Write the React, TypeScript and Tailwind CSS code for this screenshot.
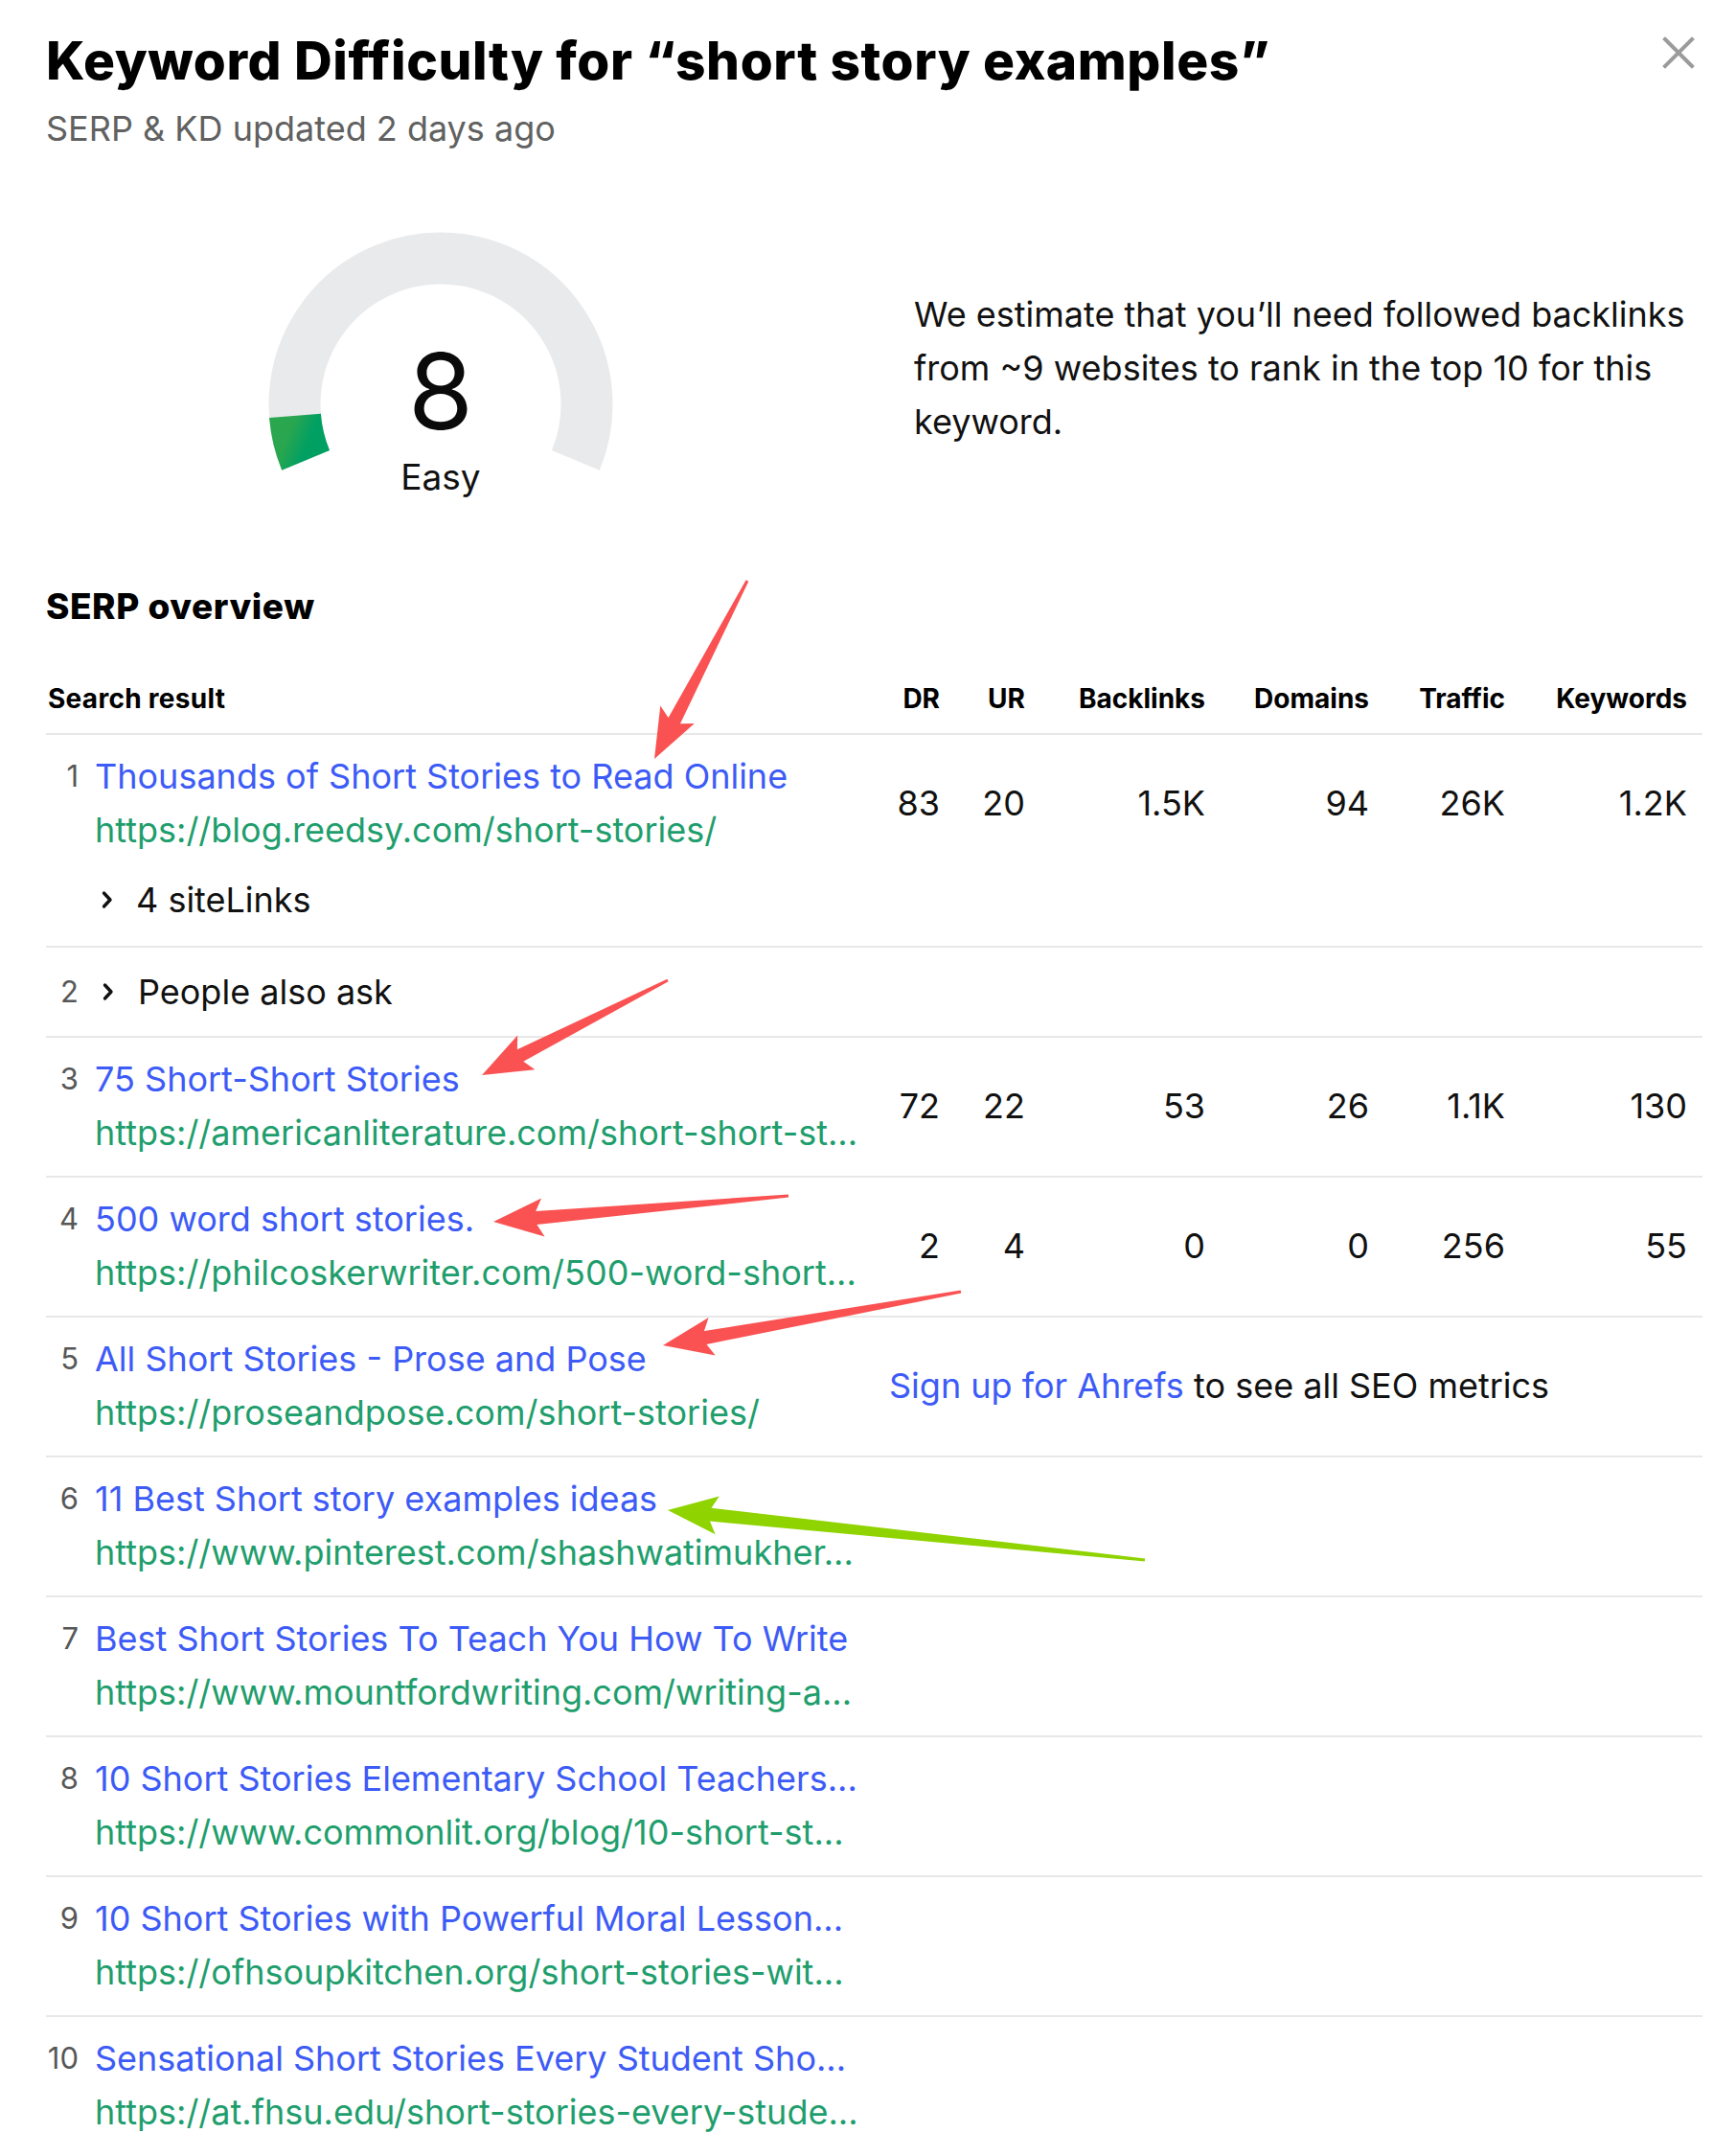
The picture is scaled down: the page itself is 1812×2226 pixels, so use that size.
import React from "react";

type Pt = [number, number];

function arrowPoints(tail: Pt, tip: Pt, headLen = 52, headHalf = 20, baseHalf = 7, tailHalf = 1.5) {
  const dx = tip[0] - tail[0];
  const dy = tip[1] - tail[1];
  const L = Math.hypot(dx, dy);
  const ux = dx / L;
  const uy = dy / L;
  const px = -uy;
  const py = ux;
  const bx = tip[0] - ux * headLen;
  const by = tip[1] - uy * headLen;
  const jx = tip[0] - ux * (headLen - 7);
  const jy = tip[1] - uy * (headLen - 7);
  const pts: Pt[] = [
    tip,
    [bx + px * headHalf, by + py * headHalf],
    [jx + px * baseHalf, jy + py * baseHalf],
    [tail[0] + px * tailHalf, tail[1] + py * tailHalf],
    [tail[0] - px * tailHalf, tail[1] - py * tailHalf],
    [jx - px * baseHalf, jy - py * baseHalf],
    [bx - px * headHalf, by - py * headHalf],
  ];
  return pts.map((p) => `${p[0].toFixed(1)},${p[1].toFixed(1)}`).join(" ");
}

function arcPath(cx: number, cy: number, r: number, a0: number, a1: number) {
  const rad = (a: number) => (a * Math.PI) / 180;
  const x0 = cx + r * Math.cos(rad(a0));
  const y0 = cy + r * Math.sin(rad(a0));
  const x1 = cx + r * Math.cos(rad(a1));
  const y1 = cy + r * Math.sin(rad(a1));
  const large = a1 - a0 > 180 ? 1 : 0;
  return `M ${x0.toFixed(2)} ${y0.toFixed(2)} A ${r} ${r} 0 ${large} 1 ${x1.toFixed(2)} ${y1.toFixed(2)}`;
}

function Gauge() {
  const cx = 180;
  const cy = 180;
  const r = 152.5;
  return (
    <svg width="360" height="280" viewBox="0 0 360 280" className="block">
      <defs>
        <linearGradient id="kdgreen" x1="0" y1="0" x2="0.6" y2="1">
          <stop offset="0" stopColor="#2aa64f" />
          <stop offset="1" stopColor="#00a063" />
        </linearGradient>
      </defs>
      <path d={arcPath(cx, cy, r, 157.5, 382.5)} fill="none" stroke="#e9eaec" strokeWidth="54" />
      <path d={arcPath(cx, cy, r, 157.5, 175.5)} fill="none" stroke="url(#kdgreen)" strokeWidth="54" />
      <text x="180" y="206" textAnchor="middle" fontFamily="Inter, 'Noto Sans', sans-serif" fontSize="110" fill="#0a0a0a">
        8
      </text>
      <text x="180" y="269" textAnchor="middle" fontFamily="Inter, 'Noto Sans', sans-serif" fontSize="37" fill="#111">
        Easy
      </text>
    </svg>
  );
}

function Chevron() {
  return (
    <svg width="14" height="20" viewBox="0 0 14 20" className="block">
      <path d="M3.5 3 L10 10 L3.5 17" fill="none" stroke="#111" strokeWidth="3.4" strokeLinecap="round" strokeLinejoin="round" />
    </svg>
  );
}

const GRID = "grid grid-cols-[872px_77px_89px_188px_171px_142px_190px]";

type Row = {
  n: number;
  title: string;
  url: string;
  m?: string[];
  signup?: boolean;
  sitelinks?: string;
};

const rows: Row[] = [
  {
    n: 1,
    title: "Thousands of Short Stories to Read Online",
    url: "https://blog.reedsy.com/short-stories/",
    m: ["83", "20", "1.5K", "94", "26K", "1.2K"],
    sitelinks: "4 siteLinks",
  },
  {
    n: 3,
    title: "75 Short-Short Stories",
    url: "https://americanliterature.com/short-short-st...",
    m: ["72", "22", "53", "26", "1.1K", "130"],
  },
  {
    n: 4,
    title: "500 word short stories.",
    url: "https://philcoskerwriter.com/500-word-short...",
    m: ["2", "4", "0", "0", "256", "55"],
  },
  {
    n: 5,
    title: "All Short Stories - Prose and Pose",
    url: "https://proseandpose.com/short-stories/",
    signup: true,
  },
  { n: 6, title: "11 Best Short story examples ideas", url: "https://www.pinterest.com/shashwatimukher..." },
  { n: 7, title: "Best Short Stories To Teach You How To Write", url: "https://www.mountfordwriting.com/writing-a..." },
  { n: 8, title: "10 Short Stories Elementary School Teachers...", url: "https://www.commonlit.org/blog/10-short-st..." },
  { n: 9, title: "10 Short Stories with Powerful Moral Lesson...", url: "https://ofhsoupkitchen.org/short-stories-wit..." },
  { n: 10, title: "Sensational Short Stories Every Student Sho...", url: "https://at.fhsu.edu/short-stories-every-stude..." },
];

function ResultRow({ row }: { row: Row }) {
  return (
    <div className={`border-t-2 border-[#e8e8e8] pt-[15px] ${row.sitelinks ? "pb-[24px]" : "pb-[17px]"}`}>
      <div className={GRID}>
        <div className="flex items-start">
          <div className="w-[34px] shrink-0 text-right text-[31px] leading-[56px] text-[#575757]">{row.n}</div>
          <div className="ml-[17px] min-w-0">
            <div className="text-[36px] leading-[56px] text-[#3d5bf6] whitespace-nowrap">{row.title}</div>
            <div className="text-[36px] leading-[56px] text-[#1f9e6d] whitespace-nowrap">{row.url}</div>
          </div>
        </div>
        {row.m &&
          row.m.map((v, i) => (
            <div key={i} className="flex items-center justify-end pr-[16px] text-[36px] text-[#111]">
              {v}
            </div>
          ))}
        {row.signup && (
          <div className="col-span-6 flex items-center pl-[8px] text-[36px] whitespace-nowrap">
            <span className="text-[#3d5bf6]">Sign up for Ahrefs</span>
            <span className="text-[#111]">&nbsp;to see all SEO metrics</span>
          </div>
        )}
      </div>
      {row.sitelinks && (
        <div className="mt-[21px] flex items-center pl-[57px] text-[36px] leading-[48px] text-[#111]">
          <Chevron />
          <span className="ml-[23px]">{row.sitelinks}</span>
        </div>
      )}
    </div>
  );
}

export default function App() {
  const red = "#fa5252";
  const green = "#8fd300";
  return (
    <div className="relative w-[1812px] min-h-[2226px] overflow-hidden bg-white pl-[48px] pr-[35px] font-['Inter','Noto_Sans',sans-serif] text-[#111]">
      {/* Header */}
      <div className="flex items-start justify-between pt-[31px]">
        <h1 className="text-[55px] leading-[64px] font-extrabold text-black tracking-[0.011em] whitespace-nowrap">
          Keyword Difficulty for “short story examples”
        </h1>
        <button className="mt-[7px] mr-[8px]" aria-label="Close">
          <svg width="34" height="34" viewBox="0 0 34 34" className="block">
            <path d="M3 3 L31 31 M31 3 L3 31" stroke="#9b9b9b" strokeWidth="4" strokeLinecap="square" />
          </svg>
        </button>
      </div>
      <div className="mt-[17px] text-[36px] leading-[44px] text-[#616161]">SERP &amp; KD updated 2 days ago</div>

      {/* Gauge + explanation */}
      <div className="mt-[86px] flex items-start">
        <div className="flex w-[824px] justify-center">
          <Gauge />
        </div>
        <p className="ml-[82px] mt-[58px] w-[815px] text-[36px] leading-[56px] text-[#111]">
          We estimate that you’ll need followed backlinks from ~9 websites to rank in the top 10 for this keyword.
        </p>
      </div>

      {/* SERP overview */}
      <h2 className="mt-[89px] text-[37px] leading-[44px] font-extrabold tracking-[0.015em] text-black">SERP overview</h2>

      <div className="mt-[58px]">
        <div className={`${GRID} pb-[20px] text-[28px] leading-[32px] font-bold text-black`}>
          <div className="pl-[2px] tracking-[0.01em]">Search result</div>
          <div className="pr-[16px] text-right">DR</div>
          <div className="pr-[16px] text-right">UR</div>
          <div className="pr-[16px] text-right">Backlinks</div>
          <div className="pr-[16px] text-right">Domains</div>
          <div className="pr-[16px] text-right">Traffic</div>
          <div className="pr-[16px] text-right">Keywords</div>
        </div>

        <ResultRow row={rows[0]} />

        <div className="flex h-[94px] items-center border-t-2 border-[#e8e8e8]">
          <div className="w-[34px] shrink-0 text-right text-[31px] text-[#575757]">2</div>
          <div className="ml-[24px]">
            <Chevron />
          </div>
          <span className="ml-[24px] text-[36px] text-[#111]">People also ask</span>
        </div>

        {rows.slice(1).map((r) => (
          <ResultRow key={r.n} row={r} />
        ))}
      </div>

      {/* Annotation arrows */}
      <svg className="pointer-events-none absolute left-0 top-0" width="1812" height="2226" viewBox="0 0 1812 2226">
        <polygon points={arrowPoints([780, 606], [683, 792])} fill={red} />
        <polygon points={arrowPoints([697, 1023], [503, 1122])} fill={red} />
        <polygon points={arrowPoints([823, 1248], [515, 1275])} fill={red} />
        <polygon points={arrowPoints([1003, 1348], [692, 1404])} fill={red} />
        <polygon points={arrowPoints([1195, 1628], [697, 1576])} fill={green} />
      </svg>
    </div>
  );
}
